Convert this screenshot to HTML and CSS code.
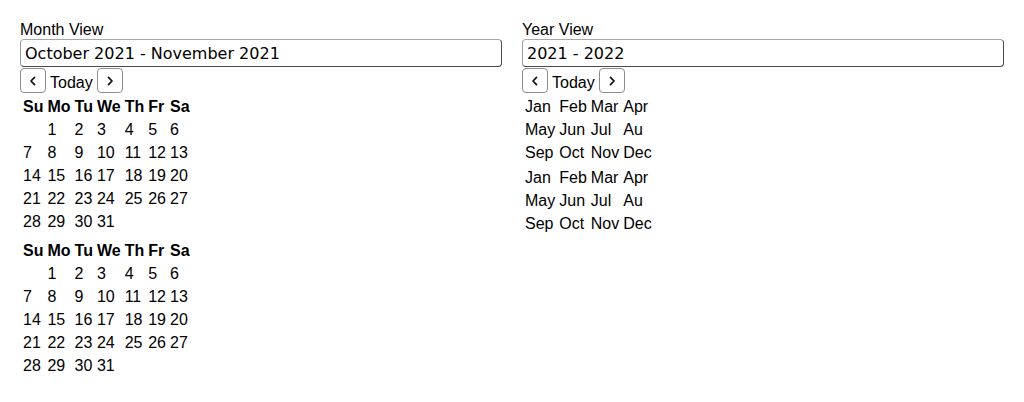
FILE: index.html
```html
<!DOCTYPE html>
<html>
<head>
<meta charset="utf-8">
<link rel="stylesheet" href="styles.css">
</head>
<body>
<div class="page">
  <div class="col">
    <div class="label">Month View</div>
    <input class="field" type="text" value="October 2021 - November 2021">
    <div class="nav">
      <button class="navbtn" type="button"><svg width="12" height="12" viewBox="0 0 12 12"><path d="M7.5 2.3 L4 6 L7.5 9.7" fill="none" stroke="#111" stroke-width="1.7" stroke-linecap="round" stroke-linejoin="round"/></svg></button>
      <span class="today">Today</span>
      <button class="navbtn" type="button"><svg width="12" height="12" viewBox="0 0 12 12"><path d="M4.5 2.3 L8 6 L4.5 9.7" fill="none" stroke="#111" stroke-width="1.7" stroke-linecap="round" stroke-linejoin="round"/></svg></button>
    </div>
    <div class="tables">
      <table class="cal">
        <tr><th>Su</th><th>Mo</th><th>Tu</th><th>We</th><th>Th</th><th>Fr</th><th>Sa</th></tr>
        <tr><td></td><td>1</td><td>2</td><td>3</td><td>4</td><td>5</td><td>6</td></tr>
        <tr><td>7</td><td>8</td><td>9</td><td>10</td><td>11</td><td>12</td><td>13</td></tr>
        <tr><td>14</td><td>15</td><td>16</td><td>17</td><td>18</td><td>19</td><td>20</td></tr>
        <tr><td>21</td><td>22</td><td>23</td><td>24</td><td>25</td><td>26</td><td>27</td></tr>
        <tr><td>28</td><td>29</td><td>30</td><td>31</td><td></td><td></td><td></td></tr>
        <tr><td></td><td></td><td></td><td></td><td></td><td></td><td></td></tr>
      </table>
      <table class="cal">
        <tr><th>Su</th><th>Mo</th><th>Tu</th><th>We</th><th>Th</th><th>Fr</th><th>Sa</th></tr>
        <tr><td></td><td>1</td><td>2</td><td>3</td><td>4</td><td>5</td><td>6</td></tr>
        <tr><td>7</td><td>8</td><td>9</td><td>10</td><td>11</td><td>12</td><td>13</td></tr>
        <tr><td>14</td><td>15</td><td>16</td><td>17</td><td>18</td><td>19</td><td>20</td></tr>
        <tr><td>21</td><td>22</td><td>23</td><td>24</td><td>25</td><td>26</td><td>27</td></tr>
        <tr><td>28</td><td>29</td><td>30</td><td>31</td><td></td><td></td><td></td></tr>
        <tr><td></td><td></td><td></td><td></td><td></td><td></td><td></td></tr>
      </table>
    </div>
  </div>
  <div class="col">
    <div class="label">Year View</div>
    <input class="field" type="text" value="2021 - 2022">
    <div class="nav">
      <button class="navbtn" type="button"><svg width="12" height="12" viewBox="0 0 12 12"><path d="M7.5 2.3 L4 6 L7.5 9.7" fill="none" stroke="#111" stroke-width="1.7" stroke-linecap="round" stroke-linejoin="round"/></svg></button>
      <span class="today">Today</span>
      <button class="navbtn" type="button"><svg width="12" height="12" viewBox="0 0 12 12"><path d="M4.5 2.3 L8 6 L4.5 9.7" fill="none" stroke="#111" stroke-width="1.7" stroke-linecap="round" stroke-linejoin="round"/></svg></button>
    </div>
    <div class="tables">
      <table class="cal">
        <tr><td>Jan</td><td>Feb</td><td>Mar</td><td>Apr</td></tr>
        <tr><td>May</td><td>Jun</td><td>Jul</td><td>Au</td></tr>
        <tr><td>Sep</td><td>Oct</td><td>Nov</td><td>Dec</td></tr>
      </table>
      <table class="cal">
        <tr><td>Jan</td><td>Feb</td><td>Mar</td><td>Apr</td></tr>
        <tr><td>May</td><td>Jun</td><td>Jul</td><td>Au</td></tr>
        <tr><td>Sep</td><td>Oct</td><td>Nov</td><td>Dec</td></tr>
      </table>
    </div>
  </div>
</div>
</body>
</html>
```
FILE: styles.css
```css
html, body {
  margin: 0;
  background: #fff;
}
body {
  font-family: "Liberation Sans", Arial, sans-serif;
  font-size: 16px;
  color: #000;
}
.page {
  display: grid;
  grid-template-columns: 1fr 1fr;
  column-gap: 20px;
  padding: 20px;
}
.col {
  display: flex;
  flex-direction: column;
  min-width: 0;
}
.label {
  line-height: 19px;
}
.field {
  box-sizing: border-box;
  width: 100%;
  height: 28px;
  margin: 0;
  padding: 2px 4px;
  font-family: "DejaVu Sans", sans-serif;
  font-size: 16px;
  color: #000;
  background: #fff;
  border: 1px solid;
  border-color: #a8a8a8 #4a4a4a #4a4a4a #9a9a9a;
  border-radius: 4px;
  outline: none;
}
.nav {
  display: flex;
  align-items: flex-start;
  column-gap: 4.5px;
  height: 27px;
}
.navbtn {
  box-sizing: border-box;
  width: 25.5px;
  height: 25px;
  margin: 1px 0 0 0;
  padding: 0;
  display: flex;
  align-items: center;
  justify-content: center;
  background: #fff;
  border: 1px solid #8c8c8c;
  border-radius: 4px;
}
.navbtn svg {
  display: block;
}
.today {
  line-height: 18px;
  margin-top: 7px;
}
.tables {
  display: flex;
  flex-direction: column;
  align-items: flex-start;
}
.cal {
  border-spacing: 2px;
  font-size: 16px;
}
.cal th,
.cal td {
  padding: 1px;
  line-height: 19px;
  text-align: left;
  vertical-align: top;
}
.cal th {
  font-weight: bold;
}
.cal tr:last-child td:empty {
  line-height: 0;
}
```
